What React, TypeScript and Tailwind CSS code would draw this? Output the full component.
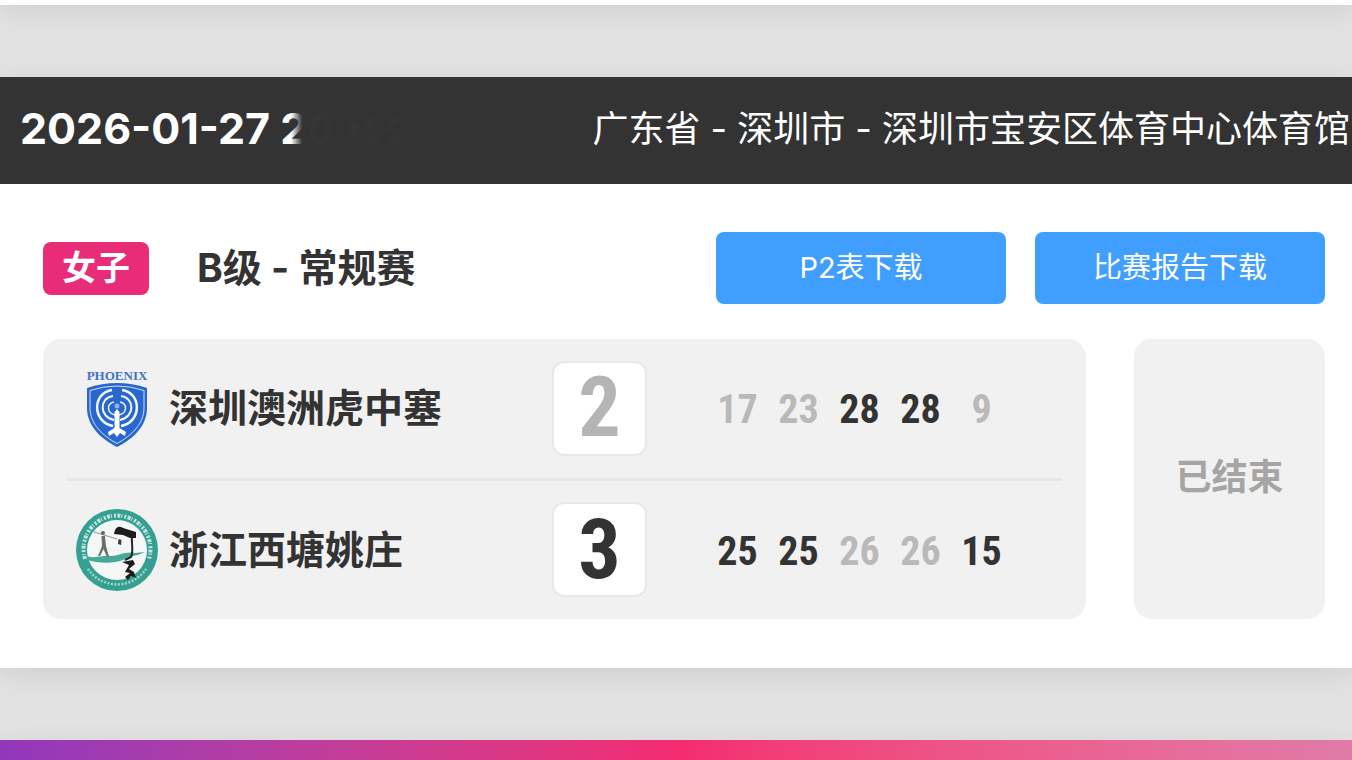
import clsx from 'clsx';
import type { ReactNode } from 'react';

type SetScore = { points: number; won: boolean };

type Team = {
  name: string;
  logo: ReactNode;
  total: number;
  winner: boolean;
  sets: SetScore[];
};

function PhoenixLogo() {
  return (
    <svg viewBox="0 0 84 84" className="size-[84px] shrink-0" aria-hidden="true">
      <text x="42" y="14" textAnchor="middle" fontSize="13" fontWeight="700" fontFamily="Liberation Serif, serif" fill="#3f74c9">
        PHOENIX
      </text>
      <path d="M12 22 Q42 12 72 22 V42 C72 60 58 73 42 81 C26 73 12 60 12 42 Z" fill="#2767cf" />
      <path d="M15 24.500 Q42 15.500 69 24.500 V42 C69 58 56 70 42 77.500 C28 70 15 58 15 42 Z" fill="none" stroke="#cfe0f8" strokeWidth="1" />
      <g fill="none" stroke="#f2f7ff" strokeWidth="2.500">
        <path d="M37 24 C17 27 17 56 38 60" />
        <path d="M47 24 C67 27 67 56 46 60" />
        <path d="M38 30 C24 32 24 51 39 54" strokeWidth="2" />
        <path d="M46 30 C60 32 60 51 45 54" strokeWidth="2" />
        <path d="M39 36 C31 38 32 47 40 49" strokeWidth="1.500" />
        <path d="M45 36 C53 38 52 47 44 49" strokeWidth="1.500" />
      </g>
      <path d="M39.500 46 L42 43 L44.500 46 V62 L51 66 L50 70 L45 67 L42 71 L39 67 L34 70 L33 66 L39.500 62 Z" fill="#ffffff" />
      <circle cx="42" cy="40" r="2.500" fill="#8fb5ee" />
    </svg>
  );
}

function XitangLogo() {
  return (
    <svg viewBox="0 0 84 84" className="size-[84px] shrink-0" aria-hidden="true">
      <circle cx="42" cy="42" r="41" fill="#35a091" />
      <circle cx="42" cy="42" r="30" fill="#f4f7f6" />
      <path d="M10 51 A33.500 33.500 0 1 1 74 51" fill="none" stroke="#c3e3dd" strokeWidth="4" strokeDasharray="3 1 1 2 2 1.500" />
      <path d="M13 61 A35 35 0 0 0 71 61" fill="none" stroke="#a4d5cc" strokeWidth="2.500" strokeDasharray="2 1.500" />
      <path d="M12 48 C20 51 28 47 36 48 C44 48 50 43 60 45 L70 44 C62 48 54 48 48 52 C38 56 22 55 12 52 Z" fill="#45a99b" />
      <path d="M19 24 L42 31" stroke="#8d9693" strokeWidth="1" />
      <circle cx="28" cy="25" r="2" fill="#5f6865" />
      <path d="M26.500 28 L30 28 L31 38 L34 49 L32 49 L28.500 41 L25 48 L23 48 L27 38 Z" fill="#66706d" />
      <path d="M39 26 C40 19 44 17 48 20 L61 24 L61 30 L55 30 L48 27 Z" fill="#1c1c1c" />
      <path d="M43.500 31 L46.500 32 L46 37 L43 36 Z" fill="#3a3a3a" />
      <path d="M57 29 C56 35 59 42 56 49 L50 52" fill="none" stroke="#242424" strokeWidth="2" />
      <path d="M47 54 L58 52 L60 56 L54 61 L59 64 L61 70 L56 68 L53 72 L50 69 L55 65 L50 64 L54 57 Z" fill="#1c1c1c" />
    </svg>
  );
}

const TEAMS: Team[] = [
  {
    name: '深圳澳洲虎中塞',
    logo: <PhoenixLogo />,
    total: 2,
    winner: false,
    sets: [
      { points: 17, won: false },
      { points: 23, won: false },
      { points: 28, won: true },
      { points: 28, won: true },
      { points: 9, won: false },
    ],
  },
  {
    name: '浙江西塘姚庄',
    logo: <XitangLogo />,
    total: 3,
    winner: true,
    sets: [
      { points: 25, won: true },
      { points: 25, won: true },
      { points: 26, won: false },
      { points: 26, won: false },
      { points: 15, won: true },
    ],
  },
];

function DownloadButton({ children }: { children: ReactNode }) {
  return (
    <button type="button" className="h-[72px] w-[290px] rounded-lg bg-[#409eff] text-[29px] text-white">
      {children}
    </button>
  );
}

function TeamRow({ team }: { team: Team }) {
  return (
    <tr className="h-[140px] border-b-3 border-[#e6e6e6] last:border-b-0">
      <th scope="row" className="pl-2 text-left font-bold">
        <div className="flex items-center gap-2.5">
          {team.logo}
          <span className="text-[39px] whitespace-nowrap">{team.name}</span>
        </div>
      </th>
      <td>
        <div
          className={clsx(
            'flex size-[95px] items-center justify-center rounded-xl border-2 border-[#e8e8e8] bg-white font-["Roboto_Condensed","Roboto",sans-serif] text-[84px] leading-none font-bold',
            team.winner ? 'text-[#333333]' : 'text-[#b5b5b5]'
          )}
        >
          {team.total}
        </div>
      </td>
      {team.sets.map((set, i) => (
        <td
          key={i}
          className={clsx(
            'pt-1 text-center font-["Roboto_Condensed","Roboto",sans-serif] text-[40px] font-bold',
            set.won ? 'text-[#333333]' : 'text-[#b9b9b9]'
          )}
        >
          {set.points}
        </td>
      ))}
      <td />
    </tr>
  );
}

function MatchCard() {
  return (
    <article className="bg-white shadow-[0_6px_28px_rgba(0,0,0,0.09)]">
      <header className="flex h-[107px] items-center justify-between bg-[#333333] pr-0.5 pb-1 pl-5 text-white">
        <div className="flex items-center">
          <div className="relative">
            <time className="text-[43px] font-bold">2026-01-27 2</time>
            {/* start time is faded out */}
            <span className="absolute inset-y-0 right-0 w-4 bg-linear-to-r from-transparent to-[#333333] to-70%" />
          </div>
          <svg viewBox="0 0 100 40" className="h-10 w-[100px] blur-[2px]" aria-hidden="true">
            <g fill="none" stroke="#393939" strokeWidth="3">
              <ellipse cx="14" cy="20" rx="8" ry="14" />
              <path d="M44 14 V26 M49 14 V26" />
              <path d="M60 32 H72 M66 8 L60 20" />
              <path d="M82 32 H94 M92 6 L80 22" />
            </g>
          </svg>
        </div>
        <p className="text-[36px] whitespace-nowrap">广东省 - 深圳市 - 深圳市宝安区体育中心体育馆</p>
      </header>

      <div className="pt-12 pr-[27px] pb-[49px] pl-[43px]">
        <div className="flex items-center">
          <span className="flex h-[53px] w-[106px] items-center justify-center rounded-lg bg-[#e92c77] pb-0.5 text-[34px] font-bold text-white">
            女子
          </span>
          <h2 className="ml-12 text-[39px] font-bold">B级 - 常规赛</h2>
          <div className="ml-auto flex gap-[29px]">
            <DownloadButton>P2表下载</DownloadButton>
            <DownloadButton>比赛报告下载</DownloadButton>
          </div>
        </div>

        <div className="mt-[35px] flex gap-12">
          <div className="flex-1 rounded-[18px] bg-[#f1f1f1] px-6">
            <table className="w-full table-fixed">
              <colgroup>
                <col />
                <col className="w-[155px]" />
                <col span={5} className="w-[61px]" />
                <col className="w-[50px]" />
              </colgroup>
              <tbody>
                {TEAMS.map((team) => (
                  <TeamRow key={team.name} team={team} />
                ))}
              </tbody>
            </table>
          </div>
          <div className="flex w-[191px] items-center justify-center rounded-[18px] bg-[#f1f1f1] pb-1 text-[36px] font-bold text-[#a5a5a5]">
            已结束
          </div>
        </div>
      </div>
    </article>
  );
}

export default function App() {
  return (
    <main className='flex min-h-screen flex-col gap-[72px] overflow-hidden bg-[#e2e2e2] font-["Inter","Noto_Sans_CJK_SC",sans-serif] text-[#333333]'>
      {/* tail of the previous card */}
      <div className="-mt-[75px] h-20 bg-white shadow-[0_6px_28px_rgba(0,0,0,0.09)]" />
      <MatchCard />
      {/* top of the next card */}
      <div className="min-h-[18px] flex-1 bg-linear-to-r from-[#9137bb] via-[#f42b70] to-[#e07ba8] shadow-[0_6px_28px_rgba(0,0,0,0.09)]" />
    </main>
  );
}
